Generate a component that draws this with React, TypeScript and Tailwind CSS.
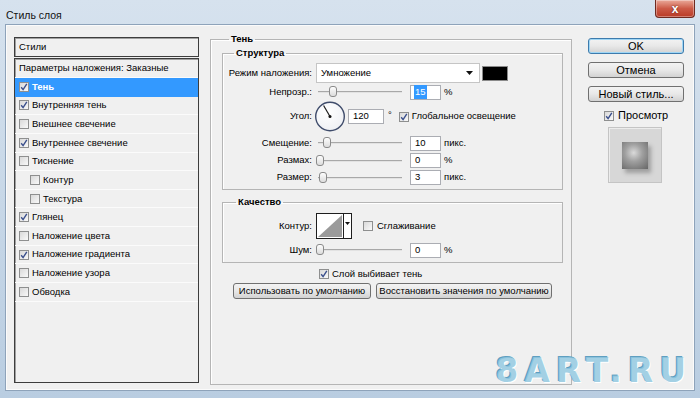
import React from "react";

type Item = { label: string; checked: boolean; indent?: boolean; selected?: boolean };

const items: Item[] = [
  { label: "Тень", checked: true, selected: true },
  { label: "Внутренняя тень", checked: true },
  { label: "Внешнее свечение", checked: false },
  { label: "Внутреннее свечение", checked: true },
  { label: "Тиснение", checked: false },
  { label: "Контур", checked: false, indent: true },
  { label: "Текстура", checked: false, indent: true },
  { label: "Глянец", checked: true },
  { label: "Наложение цвета", checked: false },
  { label: "Наложение градиента", checked: true },
  { label: "Наложение узора", checked: false },
  { label: "Обводка", checked: false },
];

function Check({ checked }: { checked: boolean }) {
  return (
    <span className="flex h-[10px] w-[10px] shrink-0 items-center justify-center border border-[#8e8f8f] bg-linear-to-br from-[#d9d9d9] to-[#f9f9f9]">
      {checked && (
        <svg width="8" height="8" viewBox="0 0 8 8">
          <path d="M1.2 4.2 L3.1 6.6 L6.8 0.8" fill="none" stroke="#3a4f8c" strokeWidth="1.4" />
        </svg>
      )}
    </span>
  );
}

function Slider({ pos }: { pos: number }) {
  return (
    <div className="relative ml-[5px] h-[14px] w-[84px] shrink-0">
      <div className="absolute left-0 right-0 top-[6px] h-[2px] border-t border-[#a8a8a8] bg-[#e2e2e2]" />
      <div
        className="absolute top-[1px] h-[11px] w-[8px] rounded-[3px] border border-[#8a8a8a] bg-linear-to-b from-[#fdfdfd] to-[#dcdcdc]"
        style={{ left: pos }}
      />
    </div>
  );
}

function NumBox({ value, w = 31, selected = false }: { value: string; w?: number; selected?: boolean }) {
  return (
    <div
      className="flex h-[15px] shrink-0 items-center border border-[#abadb3] bg-white pl-[3px] text-[9.5px]"
      style={{ width: w }}
    >
      {selected ? <span className="bg-[#3399ff] px-[1px] text-white">{value}</span> : <span className="pl-[1px]">{value}</span>}
    </div>
  );
}

function Label({ children }: { children: React.ReactNode }) {
  return <div className="w-[90px] shrink-0 pr-[1px] text-right text-[9.5px]">{children}</div>;
}

function WinButton({ children, focused = false, className = "" }: { children: React.ReactNode; focused?: boolean; className?: string }) {
  return (
    <div
      className={
        "flex h-[16px] items-center justify-center rounded-[3px] border bg-linear-to-b from-[#f3f3f3] via-[#e8e8e8] to-[#d2d2d2] " +
        (focused ? "border-[#3d7bad] shadow-[inset_0_0_0_1px_#9fd6f5] " : "border-[#707070] ") +
        className
      }
    >
      {children}
    </div>
  );
}

function AngleDial() {
  return (
    <svg width="32" height="31" viewBox="0 0 32 31" className="shrink-0">
      <defs>
        <radialGradient id="dialbg" cx="0.4" cy="0.35" r="0.7">
          <stop offset="0" stopColor="#ffffff" />
          <stop offset="1" stopColor="#eef0f4" />
        </radialGradient>
      </defs>
      <circle cx="16" cy="15.5" r="14.3" fill="url(#dialbg)" stroke="#3f4c6b" strokeWidth="1.4" />
      <line x1="16" y1="15.5" x2="9.6" y2="4.5" stroke="#1c1c1c" strokeWidth="1.2" />
      <circle cx="16" cy="15.5" r="1.5" fill="#111" />
    </svg>
  );
}

export default function App() {
  return (
    <div className="relative flex h-[398px] w-[700px] flex-col overflow-hidden bg-linear-to-b from-[#d6e2ee] to-[#b9cde1] font-['Liberation_Sans',Arial,sans-serif] text-black">
      {/* title bar */}
      <div className="flex h-[24px] shrink-0 items-start justify-between">
        <div className="pl-[6px] pt-[8px] text-[10.5px] text-[#111]">Стиль слоя</div>
        <div className="mr-[5px] flex h-[18px] w-[40px] items-center justify-center rounded-b-[4px] border border-t-0 border-[#6f2a20] bg-linear-to-b from-[#e9a99a] via-[#cc5a47] to-[#b93a25] shadow-[inset_0_0_0_1px_rgba(255,255,255,0.35)]">
          <span className="text-[12px] font-bold leading-none text-white [text-shadow:0_0_2px_#5a1a10]">x</span>
        </div>
      </div>

      {/* client area */}
      <div className="mx-[5px] mb-[7px] flex flex-1 items-start border border-[#8ea3ba] bg-[#f0f0f0] shadow-[inset_0_0_0_1px_#fbfbfb]">
        {/* styles list */}
        <div className="ml-[8px] mt-[12px] flex w-[185px] shrink-0 flex-col">
          <div className="flex h-[20px] items-center border border-[#3d3d3d] pl-[4px] text-[9.5px] shadow-[inset_1px_1px_0_#a0a0a0]">Стили</div>
          <div className="mt-[1px] flex h-[325px] flex-col border border-[#3d3d3d] shadow-[inset_1px_1px_0_#a0a0a0]">
            <div className="flex h-[19px] shrink-0 items-center border-b border-[#fbfbfb] pl-[4px] text-[9.5px]">
              Параметры наложения: Заказные
            </div>
            {items.map((it) => (
              <div
                key={it.label}
                className={
                  "flex h-[18.65px] shrink-0 items-center gap-[3px] border-b text-[9.5px] " +
                  (it.indent ? "pl-[15px] " : "pl-[4px] ") +
                  (it.selected ? "border-[#3399ff] bg-[#3399ff] font-bold text-white" : "border-[#fbfbfb]")
                }
              >
                <Check checked={it.checked} />
                <span>{it.label}</span>
              </div>
            ))}
          </div>
        </div>

        {/* Тень group */}
        <fieldset className="ml-[11px] mt-[8px] h-[352px] w-[362px] shrink-0 border border-[#b5b5b5] pl-[11px] pr-[8px] shadow-[inset_1px_1px_0_#fff]">
          <legend className="ml-[7px] px-[2px] text-[9.5px] font-bold leading-[12px]">Тень</legend>

          <fieldset className="mt-[2px] border border-[#b5b5b5] pb-[3px] shadow-[inset_1px_1px_0_#fff]">
            <legend className="ml-[11px] px-[2px] text-[9.5px] font-bold leading-[12px]">Структура</legend>

            <div className="mt-[4px] flex h-[20px] items-center">
              <Label>Режим наложения:</Label>
              <div className="ml-[3px] flex h-[20px] w-[164px] items-center justify-between border border-[#c5c5c5] bg-white pl-[4px] pr-[6px] text-[9.5px]">
                <span>Умножение</span>
                <svg width="7" height="4" viewBox="0 0 7 4"><path d="M0 0 H7 L3.5 4 Z" fill="#111" /></svg>
              </div>
              <div className="ml-[2px] h-[15px] w-[26px] border border-[#8a8a8a] bg-black" />
            </div>

            <div className="flex h-[18px] items-center">
              <Label>Непрозр.:</Label>
              <Slider pos={11} />
              <div className="ml-[8px]"><NumBox value="15" selected /></div>
              <span className="ml-[3px] text-[9.5px]">%</span>
            </div>

            <div className="flex h-[31px] items-center">
              <Label>Угол:</Label>
              <div className="ml-[1px]"><AngleDial /></div>
              <div className="ml-[2px]"><NumBox value="120" w={36} /></div>
              <span className="ml-[4px] self-start pt-[7px] text-[9.5px]">°</span>
              <div className="ml-[7px] flex items-center gap-[3px] text-[9.5px]">
                <Check checked />
                <span>Глобальное освещение</span>
              </div>
            </div>

            <div className="mt-[2px] flex h-[18px] items-center">
              <Label>Смещение:</Label>
              <Slider pos={5} />
              <div className="ml-[8px]"><NumBox value="10" /></div>
              <span className="ml-[3px] text-[9.5px]">пикс.</span>
            </div>

            <div className="flex h-[17px] items-center">
              <Label>Размах:</Label>
              <Slider pos={-2} />
              <div className="ml-[8px]"><NumBox value="0" /></div>
              <span className="ml-[3px] text-[9.5px]">%</span>
            </div>

            <div className="flex h-[17px] items-center">
              <Label>Размер:</Label>
              <Slider pos={1} />
              <div className="ml-[8px]"><NumBox value="3" /></div>
              <span className="ml-[3px] text-[9.5px]">пикс.</span>
            </div>
          </fieldset>

          <fieldset className="mt-[6px] border border-[#b5b5b5] pb-[4px] shadow-[inset_1px_1px_0_#fff]">
            <legend className="ml-[13px] px-[2px] text-[9.5px] font-bold leading-[12px]">Качество</legend>

            <div className="mt-[5px] flex h-[26px] items-center">
              <Label>Контур:</Label>
              <div className="ml-[3px] flex h-[26px] w-[36px] border border-[#1e1e1e] bg-white">
                <svg width="26" height="24" viewBox="0 0 26 24" className="shrink-0">
                  <path d="M1 23 L25 1 L25 23 Z" fill="#9a9a9a" />
                </svg>
                <div className="flex flex-1 items-start justify-center border-l border-[#1e1e1e] pt-[8px]">
                  <svg width="5" height="3" viewBox="0 0 5 3"><path d="M0 0 H5 L2.5 3 Z" fill="#111" /></svg>
                </div>
              </div>
              <div className="ml-[11px] flex items-center gap-[4px] text-[9.5px]">
                <Check checked={false} />
                <span>Сглаживание</span>
              </div>
            </div>

            <div className="mt-[3px] flex h-[16px] items-center">
              <Label>Шум:</Label>
              <Slider pos={-2} />
              <div className="ml-[8px]"><NumBox value="0" /></div>
              <span className="ml-[3px] text-[9.5px]">%</span>
            </div>
          </fieldset>

          <div className="ml-[97px] mt-[4px] flex h-[14px] items-center gap-[3px] text-[9.5px]">
            <Check checked />
            <span>Слой выбивает тень</span>
          </div>

          <div className="ml-[11px] mt-[2px] flex gap-[5px] text-[9.5px]">
            <WinButton className="w-[138px]">Использовать по умолчанию</WinButton>
            <WinButton className="w-[176px]">Восстановить значения по умолчанию</WinButton>
          </div>
        </fieldset>

        {/* buttons column */}
        <div className="ml-[16px] mt-[13px] flex w-[96px] shrink-0 flex-col text-[11px]">
          <WinButton focused>OK</WinButton>
          <WinButton className="mt-[8px]">Отмена</WinButton>
          <WinButton className="mt-[8px]">Новый стиль...</WinButton>
          <div className="ml-[16px] mt-[8px] flex h-[11px] items-center gap-[4px]">
            <Check checked />
            <span>Просмотр</span>
          </div>
          <div className="ml-[20px] mt-[6px] h-[56px] w-[54px] border border-[#c4c4c4] bg-[#d7d7d7] pl-[13px] pt-[14px] shadow-[inset_1px_1px_0_#ececec]">
            <div className="h-[27px] w-[26px] bg-[radial-gradient(circle_at_45%_40%,#dadada_0%,#a0a0a0_40%,#666666_100%)] shadow-[3px_4px_4px_rgba(90,90,90,0.45)]" />
          </div>
        </div>
      </div>

      {/* watermark */}
      <div className="pointer-events-none absolute bottom-[11px] right-[8px] font-['DejaVu_Sans',sans-serif] text-[33px] font-bold leading-none tracking-[6px] text-[#93c8e0]/85 [text-shadow:1px_1px_0_#ffffff,-1px_-1px_0_#5f9fc0]">
        8ART.RU
      </div>
    </div>
  );
}
